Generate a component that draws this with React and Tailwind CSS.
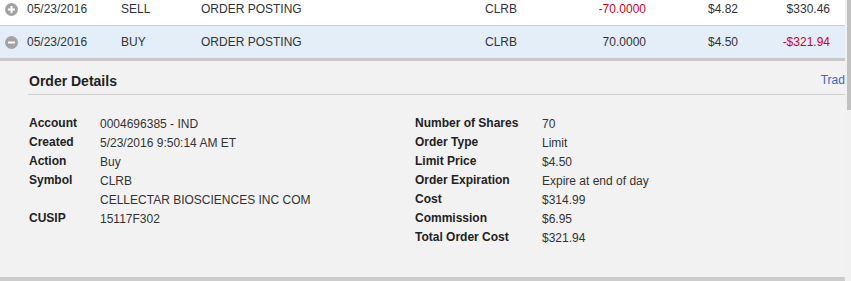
import React from 'react';

const filas = [
  { fecha: '05/23/2016', tipo: 'SELL', desc: 'ORDER POSTING', simbolo: 'CLRB', cant: '-70.0000', precio: '$4.82', monto: '$330.46', abierto: false },
  { fecha: '05/23/2016', tipo: 'BUY', desc: 'ORDER POSTING', simbolo: 'CLRB', cant: '70.0000', precio: '$4.50', monto: '-$321.94', abierto: true },
];

const izquierda = [
  ['Account', '0004696385 - IND'],
  ['Created', '5/23/2016 9:50:14 AM ET'],
  ['Action', 'Buy'],
  ['Symbol', 'CLRB'],
  ['', 'CELLECTAR BIOSCIENCES INC COM'],
  ['CUSIP', '15117F302'],
];

const derecha = [
  ['Number of Shares', '70'],
  ['Order Type', 'Limit'],
  ['Limit Price', '$4.50'],
  ['Order Expiration', 'Expire at end of day'],
  ['Cost', '$314.99'],
  ['Commission', '$6.95'],
  ['Total Order Cost', '$321.94'],
];

const Toggle = ({ abierto }) => (
  <svg width="13" height="13" viewBox="0 0 13 13">
    <circle cx="6.5" cy="6.5" r="6.5" fill="#a3a3a3" />
    <rect x="3" y="5.5" width="7" height="2" fill="#fff" />
    {!abierto && <rect x="5.5" y="3" width="2" height="7" fill="#fff" />}
  </svg>
);

const Negativo = ({ v }) => (
  <span className={v.startsWith('-') ? 'text-[#d0021b]' : ''}>{v}</span>
);

const Fila = ({ f, primera }) => (
  <div
    className={
      primera
        ? 'flex items-start pt-[2px] h-[26px] bg-white border-b border-[#c9cdd2]'
        : 'flex items-center h-[35px] bg-[#e4eef8] border-b-[3px] border-[#c8c8c8]'
    }
  >
    <div className="w-[27px] pl-[5px] flex items-center h-[14px]">
      <Toggle abierto={f.abierto} />
    </div>
    <div className="w-[94px]">{f.fecha}</div>
    <div className="w-[80px]">{f.tipo}</div>
    <div className="w-[284px]">{f.desc}</div>
    <div className="w-[75px]">{f.simbolo}</div>
    <div className="w-[86px] text-right"><Negativo v={f.cant} /></div>
    <div className="w-[92px] text-right">{f.precio}</div>
    <div className="w-[92px] text-right"><Negativo v={f.monto} /></div>
  </div>
);

const Lista = ({ datos, ancho }) => (
  <div className="flex flex-col">
    {datos.map(([k, v], i) => (
      <div key={i} className="flex h-[19px] leading-[19px]">
        <div className={`${ancho} font-bold text-[#222] -mt-[1px]`}>{k}</div>
        <div>{v}</div>
      </div>
    ))}
  </div>
);

export default function App() {
  return (
    <div
      className="flex w-[851px] h-[281px] overflow-hidden text-[12px] leading-[14px] text-[#333]"
      style={{ fontFamily: '"Liberation Sans", Arial, sans-serif' }}
    >
      <div className="w-[845px] flex flex-col overflow-hidden">
        {filas.map((f, i) => (
          <Fila key={i} f={f} primera={i === 0} />
        ))}
        <div className="flex-1 bg-[#f2f2f2] pl-[28px] pt-[11px] flex flex-col">
          <div className="flex items-center h-[23px] border-b border-[#cfcfcf]">
            <h2 className="text-[14px] font-bold text-[#222] pl-[1px] -mt-[5px]">Order Details</h2>
            <a className="ml-auto -mr-[40px] text-[#3a66c4] -mt-[7px] whitespace-nowrap">Trade Again</a>
          </div>
          <div className="flex pl-[1px] pt-[20px]">
            <div className="w-[386px]">
              <Lista datos={izquierda} ancho="w-[71px]" />
            </div>
            <Lista datos={derecha} ancho="w-[127px]" />
          </div>
        </div>
        <div className="h-[4px] bg-[#cccccc]" />
      </div>
      <div className="w-[6px] bg-[#f1f1f1] flex justify-end">
        <div className="w-[4px] h-[110px] bg-[#c1c1c1]" />
      </div>
    </div>
  );
}
